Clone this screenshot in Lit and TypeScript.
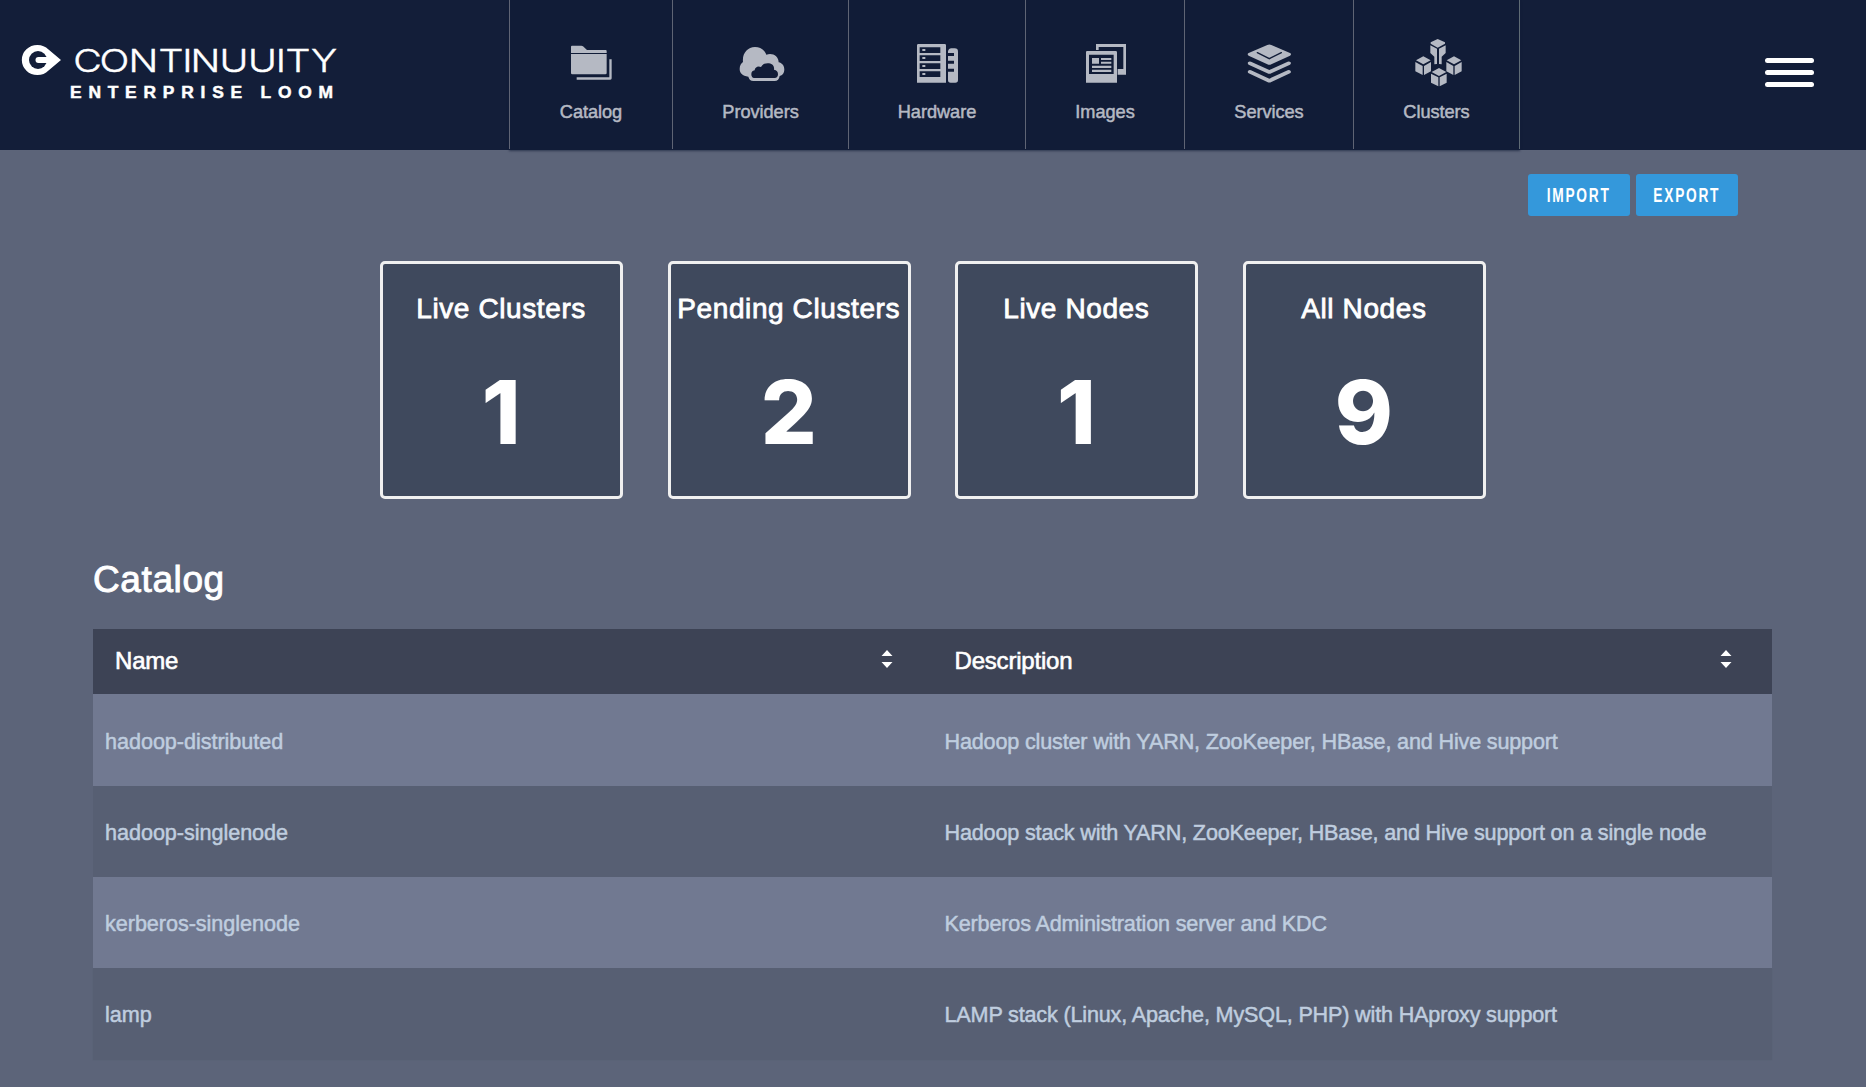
import { LitElement, html, css, svg } from "lit";
import { customElement, property } from "lit/decorators.js";

const icons: Record<string, unknown> = {
  catalog: svg`<svg class="icon" viewBox="198 54 150 150">
    <path d="M213 80q0-3 3-3h28q3 0 5 2l12 11h56q3 0 3 3v6h-107z"/>
    <path d="M213 102h107v57q0 4-4 4h-99q-4 0-4-4z"/>
    <path d="M328 118h7v57q0 4-4 4h-101v-7h98z"/>
  </svg>`,
  providers: svg`<svg class="icon" viewBox="706 54 150 150">
    <path fill-rule="evenodd" d="M743 170C725 168 717 159 717 147C717 137 721 131 727 126C724 101 740 81 763 81C781 81 792 91 797 104C815 97 834 108 834 127C845 129 851 138 851 149C851 159 845 166 837 168C836 177 830 183 822 183H758C750 183 745 178 743 170ZM760 174H822C828 174 832 170 832 163C832 155 828 150 820 149C822 137 813 130 801 130C791 130 785 134 781 141C772 136 762 142 762 151C755 152 752 157 752 163C752 169 755 174 760 174Z"/>
  </svg>`,
  hardware: svg`<svg class="icon" viewBox="216 54 150 150">
    <path fill-rule="evenodd" d="M235 72h79q4 0 4 4v112h-87v-112q0-4 4-4zM239 82v17h62v-17zM239 106v17h62v-17zM239 130v17h62v-17zM239 154v17h62v-17z"/>
    <path d="M247 87h9v6h-9zM247 111h9v6h-9zM247 135h9v6h-9zM247 159h9v6h-9z"/>
    <path d="M324 94q2-9 10-9h10q10 0 10 10v85q0 8-8 8h-14q-8 0-8-8v-25h18v-9h-18v-15h18v-9h-18v-14h18v-9h-18z"/>
  </svg>`,
  images: svg`<svg class="icon" viewBox="720 54 150 150">
    <path d="M768 72h90v92h-25v-17h17v-66h-74v9h-8z"/>
    <path fill-rule="evenodd" d="M741 93h86q4 0 4 4v91h-93v-91q0-4 3-4zM747 104v58h74v-58z"/>
    <path d="M756 114h21v17h-21zM783 114h31v6h-31zM783 125h31v6h-31zM756 137h58v7h-58zM756 149h58v7h-58z"/>
  </svg>`,
  services: svg`<svg class="icon" viewBox="192 54 150 150">
    <path d="M203 103q0-3 3-4l56-24q6-3 12 0l56 24q3 1 3 4t-3 4l-56 26q-6 3-12 0l-56-26q-3-1-3-4z"/>
    <path class="cut" d="M232 98l36 18 36-18"/>
    <path d="M204 127q4-4 9-2l55 25 55-25q5-2 9 2 2 5-2 7l-56 26q-6 3-12 0l-56-26q-4-2-2-7z"/>
    <path d="M204 153q4-4 9-2l55 25 55-25q5-2 9 2 2 5-2 7l-56 26q-6 3-12 0l-56-26q-4-2-2-7z"/>
  </svg>`,
  clusters: svg`<svg class="icon" viewBox="694 54 150 150">
    <path d="M771 57l22 10v4l-22 12-21-12v-4zM749 76l20 10v46l-8 1v-23l-12-11zM795 76l-20 10v46l8 1v-23l12-11z"/>
    <path d="M728 109l22 12-22 12-22-12zM704 126l22 12v27l-22-11zM751 126l-21 12v27l21-11z"/>
    <path d="M820 109l22 12-22 12-22-12zM797 126l21 12v27l-21-11zM843 126l-21 12v27l21-11z"/>
    <path d="M775 144l22 12-22 12-22-12zM751 161l22 11v27l-22-11zM798 161l-21 11v27l21-11z"/>
  </svg>`,
};

@customElement("loom-nav-item")
class LoomNavItem extends LitElement {
  @property() icon = "";
  @property() label = "";

  static styles = css`
    :host {
      display: flex;
      flex-direction: column;
      align-items: center;
      box-sizing: border-box;
      height: 149px;
      padding-top: 38px;
      border-left: 1px solid #5f6474;
      color: #b5b9c3;
      fill: currentColor;
    }
    .icon { display: block; width: 50px; height: 50px; }
    .cut { fill: none; stroke: #111c37; stroke-width: 4; stroke-linecap: round; }
    .label {
      margin-top: 13px;
      font-size: 18.2px;
      line-height: 22px;
      letter-spacing: -0.05px;
      -webkit-text-stroke: 0.5px currentColor;
    }
  `;

  render() {
    return html`${icons[this.icon]}<span class="label">${this.label}</span>`;
  }
}

@customElement("loom-stat")
class LoomStat extends LitElement {
  @property() label = "";
  @property() value = "";

  static styles = css`
    :host {
      display: flex;
      flex-direction: column;
      align-items: center;
      box-sizing: border-box;
      width: 243px;
      height: 238px;
      padding: 28px 1px 0 0;
      border: 3px solid #f0f0f0;
      border-radius: 5px;
      background: #3f495d;
      color: #fff;
    }
    .label {
      font-size: 28px;
      line-height: 34px;
      letter-spacing: 0.6px;
      white-space: nowrap;
      -webkit-text-stroke: 0.8px currentColor;
    }
    .value {
      margin-top: 36px;
      font-family: Inter, "Liberation Sans", sans-serif;
      font-size: 88px;
      line-height: 100px;
      font-weight: 800;
    }
  `;

  render() {
    return html`<span class="label">${this.label}</span><span class="value">${this.value}</span>`;
  }
}

@customElement("app-root")
class AppRoot extends LitElement {
  static styles = css`
    :host {
      display: block;
      box-sizing: border-box;
      width: 100%;
      height: 1087px;
      overflow: hidden;
      background: #5c6479;
      color: #fff;
      font-family: "Liberation Sans", Arial, sans-serif;
    }
    .header {
      display: grid;
      grid-template-columns: 509px 1011px 1fr;
      height: 150px;
      background: #131e39;
    }
    .logo { display: block; width: 360px; height: 150px; fill: #fff; }
    .bar { fill: none; stroke: #fff; stroke-width: 6; stroke-linecap: round; }
    .hole { fill: #131e39; }
    .wordmark {
      font-family: Inter, "Liberation Sans", sans-serif;
      font-size: 31.4px;
      font-weight: 300;
      text-anchor: middle;
      stroke: #fff;
      stroke-width: 0.4px;
    }
    .product { font-size: 17.4px; font-weight: 700; stroke: #fff; stroke-width: 0.5px; }
    .nav {
      display: grid;
      grid-template-columns: 163px 176px 177px 159px 169px 166px;
      background: #111c37;
      border-right: 1px solid #5f6b74;
      box-sizing: border-box;
      height: 149px;
      box-shadow: 0 1px 0 #111c37, 0 2px 2px rgba(17, 28, 55, 0.6);
    }
    .menu {
      display: flex;
      flex-direction: column;
      justify-self: end;
      gap: 7px;
      padding: 58px 52px 0 0;
    }
    .menu-line { width: 49px; height: 5px; border-radius: 2.5px; background: #fff; }
    .actions {
      display: flex;
      justify-content: flex-end;
      gap: 6px;
      padding: 24px 128px 0 0;
    }
    .button {
      display: flex;
      align-items: center;
      justify-content: center;
      width: 102px;
      height: 42px;
      padding: 0 0 1px;
      border: 0;
      border-radius: 3px;
      background: #3498db;
      color: #fff;
      font: 700 19.6px/22px "Liberation Sans", sans-serif;
    }
    .button-text { display: block; transform: scaleX(0.7); letter-spacing: 2.5px; }
    .stats {
      display: flex;
      justify-content: center;
      gap: 44.6px;
      padding-top: 45px;
    }
    .content { padding: 57px 94px 0 93px; }
    .title {
      margin: 0;
      font-size: 37px;
      line-height: 48px;
      letter-spacing: 0.6px;
      font-weight: 400;
      -webkit-text-stroke: 0.9px currentColor;
    }
    .table { margin-top: 25px; }
    .row {
      display: grid;
      grid-template-columns: 1fr 1fr;
      align-items: center;
      height: 91px;
      background: #575f73;
      color: #bfcddf;
      font-size: 21.6px;
      -webkit-text-stroke: 0.5px currentColor;
    }
    .row:nth-child(even) { background: #717991; }
    .row:nth-child(2) { height: 92px; }
    .row:last-child { box-shadow: 0 1px 1px #575f73; }
    .cell { padding: 3px 12px 0; white-space: nowrap; letter-spacing: -0.04px; }
    .description { letter-spacing: -0.17px; }
    .head {
      display: grid;
      grid-template-columns: 1fr 1fr;
      height: 65px;
      background: #3d4355;
      font-size: 24px;
      -webkit-text-stroke: 0.6px currentColor;
    }
    .head-cell {
      display: flex;
      align-items: center;
      justify-content: space-between;
      padding: 0 41px 2px 22px;
    }
    .head-label { letter-spacing: -0.2px; }
    .sort { display: block; width: 10px; height: 18px; margin-top: -3px; fill: #fff; overflow: visible; }
  `;

  private nav = [
    ["catalog", "Catalog"],
    ["providers", "Providers"],
    ["hardware", "Hardware"],
    ["images", "Images"],
    ["services", "Services"],
    ["clusters", "Clusters"],
  ];

  private stats = [
    ["Live Clusters", "1"],
    ["Pending Clusters", "2"],
    ["Live Nodes", "1"],
    ["All Nodes", "9"],
  ];

  private rows = [
    ["hadoop-distributed", "Hadoop cluster with YARN, ZooKeeper, HBase, and Hive support"],
    ["hadoop-singlenode", "Hadoop stack with YARN, ZooKeeper, HBase, and Hive support on a single node"],
    ["kerberos-singlenode", "Kerberos Administration server and KDC"],
    ["lamp", "LAMP stack (Linux, Apache, MySQL, PHP) with HAproxy support"],
  ];

  private logo() {
    const stretch = 1.25;
    const centers = [87.5, 114.5, 143.5, 171, 187.3, 205.5, 234, 262.5, 281, 298, 324];
    return svg`<svg class="logo" viewBox="0 0 360 150">
      <path d="M61 60L48.500 70.400A15.500 15 0 1 1 48.500 49.600Z"/>
      <circle class="hole" cx="38" cy="60" r="9"/>
      <path class="bar" d="M38.500 60H50"/>
      <text class="wordmark" transform="translate(0 72) scale(${stretch} 1)" y="0"
        x=${centers.map((c) => (c / stretch).toFixed(2)).join(" ")}>CONTINUUITY</text>
      <text class="product" x="70" y="97.500" textLength="263" lengthAdjust="spacing">ENTERPRISE LOOM</text>
    </svg>`;
  }

  private headCell(label: string) {
    return html`<div class="head-cell">
      <span class="head-label">${label}</span>
      <svg class="sort" viewBox="0 0 10 18"><path d="M5 0l5.500 6H-0.500zM-0.500 12h11l-5.500 6z" /></svg>
    </div>`;
  }

  render() {
    return html`
      <header class="header">
        ${this.logo()}
        <nav class="nav">
          ${this.nav.map(([icon, label]) => html`<loom-nav-item .icon=${icon} .label=${label}></loom-nav-item>`)}
        </nav>
        <div class="menu">
          <div class="menu-line"></div>
          <div class="menu-line"></div>
          <div class="menu-line"></div>
        </div>
      </header>
      <div class="actions">
        <button class="button"><span class="button-text">IMPORT</span></button>
        <button class="button"><span class="button-text">EXPORT</span></button>
      </div>
      <section class="stats">
        ${this.stats.map(([label, value]) => html`<loom-stat .label=${label} .value=${value}></loom-stat>`)}
      </section>
      <main class="content">
        <h2 class="title">Catalog</h2>
        <div class="table">
          <div class="head">${this.headCell("Name")}${this.headCell("Description")}</div>
          ${this.rows.map(
            ([name, description]) => html`<div class="row">
              <div class="cell">${name}</div>
              <div class="cell description">${description}</div>
            </div>`
          )}
        </div>
      </main>
    `;
  }
}
